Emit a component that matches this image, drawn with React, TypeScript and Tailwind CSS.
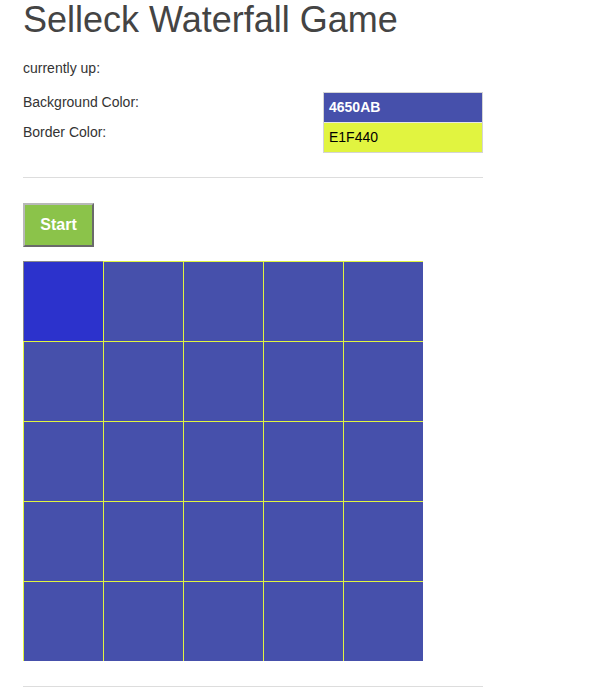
const SIZE = 5;
const CELL_BG = '#4650AB';

export default function App() {
  const cells = Array.from({ length: SIZE * SIZE }, (_, i) => i);

  return (
    <div className="min-h-screen bg-white font-['Liberation_Sans',Arial,sans-serif] text-[14px] text-[#333]">
      <div className="w-[460px] ml-[23px]">
        <h1 className="text-[36px] leading-[40px] font-normal text-[#444]">Selleck Waterfall Game</h1>
        <p className="mt-[18px] leading-[20px]">currently up:</p>

        <div className="mt-[14px] grid grid-cols-[300px_160px]">
          <div className="flex flex-col">
            <div className="h-[30px] leading-[20px]">Background Color:</div>
            <div className="h-[30px] leading-[20px]">Border Color:</div>
          </div>
          <div className="flex flex-col border border-[#d4d4d4]">
            <div className="h-[29px] bg-[#4650AB] px-[5px] leading-[29px] font-bold text-white">4650AB</div>
            <div className="h-px bg-[#e6e6e6]" />
            <div className="h-[29px] bg-[#E1F440] px-[5px] leading-[29px] text-black">E1F440</div>
          </div>
        </div>

        <hr className="mt-[24px] border-0 border-t border-[#ddd]" />

        <button className="mt-[25px] h-[44px] w-[71px] border-2 border-t-[#b8b8b8] border-l-[#b8b8b8] border-r-[#6a6a6a] border-b-[#6a6a6a] bg-[#8BC34A] text-[16px] font-bold text-white">
          Start
        </button>

        <div className="mt-[14px] grid w-[400px] grid-cols-5">
          {cells.map((i) => (
            <div
              key={i}
              className={
                i === 0
                  ? 'h-[80px] border-t border-l border-[#8a8a8a] bg-[#2C32CC]'
                  : 'h-[80px] border-t border-l border-[#E1F440]'
              }
              style={i === 0 ? undefined : { backgroundColor: CELL_BG }}
            />
          ))}
        </div>

        <hr className="mt-[25px] border-0 border-t border-[#ddd]" />
      </div>
    </div>
  );
}
